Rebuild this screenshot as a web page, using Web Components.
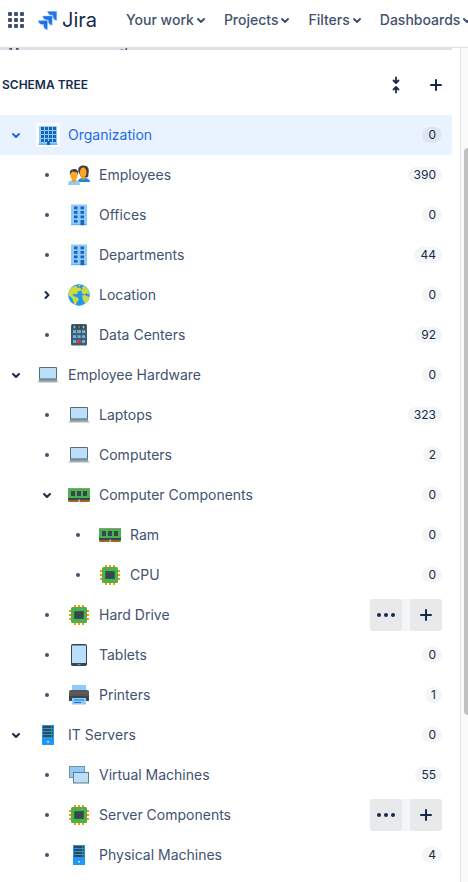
<!DOCTYPE html>
<html lang="en">
<head>
<meta charset="utf-8">
<meta name="viewport" content="width=device-width, initial-scale=1">
<title>Jira - Schema tree</title>
<style>
  html, body { height: 100%; }
  body { margin: 0; background: #fff; color: #42526e; font: 14px/20px Inter, "Liberation Sans", sans-serif; }
</style>
</head>
<body>
<app-shell>
  <jira-header slot="header">
    <nav-item>Your work</nav-item>
    <nav-item>Projects</nav-item>
    <nav-item>Filters</nav-item>
    <nav-item>Dashboards</nav-item>
  </jira-header>
  <schema-link>Asset management</schema-link>
  <tree-toolbar>Schema tree</tree-toolbar>
  <schema-tree>
    <tree-row icon="campus" state="open" count="0" selected>Organization</tree-row>
    <tree-row level="1" icon="people" count="390">Employees</tree-row>
    <tree-row level="1" icon="office" count="0">Offices</tree-row>
    <tree-row level="1" icon="office" count="44">Departments</tree-row>
    <tree-row level="1" icon="globe" state="closed" count="0">Location</tree-row>
    <tree-row level="1" icon="datacenter" count="92">Data Centers</tree-row>
    <tree-row icon="laptop" state="open" count="0">Employee Hardware</tree-row>
    <tree-row level="1" icon="laptop" count="323">Laptops</tree-row>
    <tree-row level="1" icon="laptop" count="2">Computers</tree-row>
    <tree-row level="1" icon="ram" state="open" count="0">Computer Components</tree-row>
    <tree-row level="2" icon="ram" count="0">Ram</tree-row>
    <tree-row level="2" icon="cpu" count="0">CPU</tree-row>
    <tree-row level="1" icon="cpu" actions>Hard Drive</tree-row>
    <tree-row level="1" icon="tablet" count="0">Tablets</tree-row>
    <tree-row level="1" icon="printer" count="1">Printers</tree-row>
    <tree-row icon="server" state="open" count="0">IT Servers</tree-row>
    <tree-row level="1" icon="windows" count="55">Virtual Machines</tree-row>
    <tree-row level="1" icon="cpu" actions>Server Components</tree-row>
    <tree-row level="1" icon="server" count="4">Physical Machines</tree-row>
  </schema-tree>
</app-shell>

<script>
const rect = (x, y, w, h, fill, extra = '') => `<rect x="${x}" y="${y}" width="${w}" height="${h}" fill="${fill}" ${extra}/>`;
const grid = (xs, ys, w, h, fill) => ys.map(y => xs.map(x => rect(x, y, w, h, fill)).join('')).join('');

/* Object type icons, all on a 24 x 24 grid. */
const ICONS = {
  campus: rect(3, 3, 18, 18, '#90caf9') + rect(2.5, 20.5, 19, 1.5, '#64b5f6')
    + grid([5, 9, 13, 17], [4, 8, 12, 16], 3, 3, '#1565c0') + rect(11, 18, 3, 4, '#1565c0'),
  office: rect(4, 1.5, 16, 20, '#90caf9') + rect(4, 21, 16, 1.2, '#64b5f6')
    + grid([7, 13.5], [3.5, 8, 12.5], 3.5, 2.8, '#1565c0') + rect(7, 17, 3.5, 2.6, '#1565c0') + rect(13.5, 17, 3.6, 5.2, '#1565c0'),
  people: `<path d="M11 19c0-3 2-4 5.500-4s6.500 1 6.500 4z" fill="#1e88e5"/><path d="M11.500 9c-1.200-5 1.800-6.500 5-6.500 4.500 0 6.200 3.500 5 8-.5 2.500 .8 3-2 4h-5z" fill="#424242"/><ellipse cx="16.200" cy="9.500" rx="3.300" ry="5" fill="#ffa726"/><path d="M14.500 13h3.500v2.500l-2 1.500-1.500-1.500z" fill="#ff9800"/><path d="M1 22c0-4 2.500-5 6-5s6 1 6 5z" fill="#90caf9"/><path d="M5 16h4v2l-2 1.500L5 18z" fill="#ff9800"/><ellipse cx="7" cy="12.500" rx="3.700" ry="4.700" fill="#ffa726"/><path d="M3 12c-.8-4 1-6 4.200-6 3.500 0 4.500 2.500 3.800 6l-1-2.500-4.500-1L4 10z" fill="#424242"/>`,
  globe: `<circle cx="12" cy="12" r="10.700" fill="#2196f3"/><path d="M3 6.500 6 3.500l4-.8.500 2.300 2-.5 2.500 2-2 1.500-2 .5-.5 2-2.500 1-1-1-1.500 1.500 2 1.500 3 1 1.500 2-2.500 3-.5 2.800L7 21l-1-4-2-3-2.300-1.500L2 8z" fill="#cddc39"/><path d="M15 4.500l1.500-2 4 3.500 1.700 4-1 1.500-1.500-1.500-2 1.500-2.500-1-1-2.500 1.500-2zM15 12.500l3-.5 3 1.500 1.500.5-2 4.500-2.500 2-2-3.500z" fill="#cddc39"/><path d="M11 2l3 .2-1.500 1.600z" fill="#cddc39"/>`,
  datacenter: rect(4, 1, 16, 21.500, '#455a64', 'rx="1.500"') + rect(5, 2, 14, 3.500, '#37474f')
    + `<path d="M7.500 2.500v3M6 4h3M12 3v2M15 4h3M16.500 2.500v3" stroke="#90caf9" stroke-width=".8"/>`
    + grid([6, 10.500, 15], [7.300, 12.200, 17.100], 3.200, 2.800, '#64b5f6') + rect(10.500, 7.300, 3.200, 2.800, '#90a4ae') + rect(10.500, 17.100, 3.200, 2.800, '#f32929'),
  laptop: rect(3, 4, 18, 13, '#546e7a', 'rx="1"') + rect(4, 5, 16, 10.500, '#bbdefb')
    + `<path d="M1 18.500h22l-1 1.500H2z" fill="#cfd8dc"/><path d="M3.500 15.500h17l1 3h-19z" fill="#78909c"/><path d="M3 17.500h18v1H3z" fill="#90a4ae"/>`,
  ram: rect(1, 5, 22, 14, '#4caf50', 'rx="1"') + rect(1, 5, 22, 1, '#81a56d', 'rx=".5"')
    + grid([4, 10, 16], [8], 4, 5, '#37474f') + rect(1, 15, 22, 2, '#37474f') + rect(2, 17, 9.500, 2, '#a1651f') + rect(13, 17, 9, 2, '#a1651f') + rect(11.500, 16.500, 1.500, 2.500, '#b0bec5'),
  cpu: grid([7, 11, 15], [2, 20], 2, 2, '#ff9800') + grid([2, 20], [7, 11, 15], 2, 2, '#ff9800')
    + rect(4, 4, 16, 16, '#4caf50', 'rx="1.500"') + rect(7, 8, 10, 8, '#33703a', 'rx=".5"') + rect(8, 8.500, 8, 7, '#37474f'),
  tablet: rect(4, 1, 16, 22, '#37474f', 'rx="1.800"') + rect(5, 2.500, 14, 17.500, '#bbdefb') + rect(10.500, 21, 3, 1, '#78909c'),
  printer: rect(5, 2, 14, 8, '#90caf9') + `<path d="M2 9q0-2 2-2h16q2 0 2 2v8q0 1-1 1H3q-1 0-1-1z" fill="#555"/><path d="M2 13h20v4q0 1-1 1H3q-1 0-1-1z" fill="#37474f"/>`
    + rect(5, 2, 14, 5, '#90caf9') + rect(2.500, 9.500, 19, 1, '#696969') + rect(5, 15, 14, 6.500, '#90caf9') + rect(7, 16.500, 10, 1, '#1976d2') + rect(7, 19, 7, 1, '#1976d2'),
  server: rect(6, 2, 12, 20, '#2196f3') + grid([7], [3, 6, 9, 12], 10, 2, '#37474f') + grid([15], [3, 6, 9, 12], 1, 2, '#388e3c') + rect(11, 18, 2, 1.500, '#bbdefb'),
  windows: rect(2.500, 3.500, 15, 11, '#90caf9', 'stroke="#78909c"') + rect(6.500, 9.500, 15, 10.500, '#bbdefb', 'stroke="#607d8b"')
};

/* Interface glyphs, drawn in the current text colour. */
const stroke = (d, w = 2) => `<path d="${d}" fill="none" stroke="currentColor" stroke-width="${w}" stroke-linecap="round" stroke-linejoin="round"/>`;
const GLYPHS = {
  down: stroke('M9 11l3 3 3-3'),
  right: stroke('M10.500 9l3 3-3 3'),
  dot: '<circle cx="12" cy="12" r="2" fill="currentColor"/>',
  plus: stroke('M12 7v10M7 12h10'),
  more: '<circle cx="5" cy="12" r="2" fill="currentColor"/><circle cx="12" cy="12" r="2" fill="currentColor"/><circle cx="19" cy="12" r="2" fill="currentColor"/>',
  collapse: stroke('M12 4.500v5M9.500 7.500l2.500 2.500 2.500-2.500M12 19.500v-5M9.500 16.500l2.500-2.500 2.500 2.500', 1.8),
  apps: [4, 10, 16].map(y => [4, 10, 16].map(x => rect(x, y, 4, 4, 'currentColor', 'rx="1"')).join('')).join(''),
  book: '<path d="M5 3h14v19h-4v-3H9v3H5z" fill="currentColor"/>'
};

function define(name, markup, setup) {
  const template = document.createElement('template');
  template.innerHTML = markup;
  customElements.define(name, class extends HTMLElement {
    connectedCallback() {
      if (this.shadowRoot) return;
      this.attachShadow({ mode: 'open' }).append(template.content.cloneNode(true));
      if (setup) setup(this, this.shadowRoot);
    }
  });
}

const BUTTON = `button { display: flex; align-items: center; justify-content: center; flex: none; margin: 0; padding: 0; border: 0; background: none; color: inherit; font: inherit; cursor: pointer; }`;

define('ui-glyph', `<style>:host { display: block; flex: none; width: 24px; height: 24px; } svg { display: block; width: 100%; height: 100%; }</style><svg viewBox="0 0 24 24" aria-hidden="true"></svg>`,
  (el, root) => { root.querySelector('svg').innerHTML = GLYPHS[el.getAttribute('name')] || ICONS[el.getAttribute('name')]; });

define('app-shell', `<style>
  :host { display: flex; flex-direction: column; height: 100vh; overflow: hidden; }
  .body { display: flex; flex: 1; min-height: 0; }
  main { flex: 1; min-width: 0; overflow: hidden; padding-right: 8px; border-right: 1px solid #e3e4e6; }
  aside { position: relative; flex: none; width: 7px; background: #fafafa; overflow: hidden; }
  .thumb { position: absolute; top: 12%; left: 3px; width: 8px; height: 68%; border-radius: 4px; background: #c1c1c1; }
</style><slot name="header"></slot><div class="body"><main><slot></slot></main><aside><div class="thumb"></div></aside></div>`);

define('jira-header', `<style>
  ${BUTTON}
  :host { display: block; flex: none; overflow: hidden; border-bottom: 1px solid #dfe1e6; }
  header { display: flex; align-items: center; height: 40px; padding: 0 0 7px 4px; }
  a { display: flex; align-items: center; gap: 5px; margin: 0 29px 0 10px; color: #172b4d; font-size: 20px; line-height: 24px; text-decoration: none; }
  svg { display: block; width: 19px; height: 19px; }
  nav { display: flex; gap: 18px; }
</style><header>
  <button aria-label="Switch to"><ui-glyph name="apps"></ui-glyph></button>
  <a href="#"><svg viewBox="0 0 19 19" aria-hidden="true">
    <defs><linearGradient id="g" x1="1" y1="0" x2="0" y2="1"><stop offset="0" stop-color="#1868db"/><stop offset="1" stop-color="#2684ff"/></linearGradient></defs>
    <g stroke="#a9cfff" stroke-width=".5">
    <path d="M9.500 .2H18.800v9.300c-2.200 0-4-1.800-4-4V4.200h-1.300c-2.200 0-4-1.800-4-4z" fill="#2477ee"/>
    <path d="M4.700 4.900h9.500v9.300c-2.200 0-4-1.800-4-4V8.900H8.700c-2.200 0-4-1.800-4-4z" fill="url(#g)"/>
    <path d="M.2 9.600h9.300v9.200c-2.200 0-4-1.800-4-4v-1.200H4.200c-2.200 0-4-1.800-4-4z" fill="url(#g)"/>
    </g>
  </svg><span>Jira</span></a>
  <nav><slot></slot></nav>
</header>`);

define('nav-item', `<style>
  ${BUTTON}
  :host { display: block; flex: none; }
  button { font-weight: 500; white-space: nowrap; }
  ui-glyph { width: 24px; height: 24px; margin: 0 -7px 0 -5px; }
</style><button><slot></slot><ui-glyph name="down"></ui-glyph></button>`);

define('schema-link', `<style>
  :host { display: flex; flex-direction: column; justify-content: flex-end; height: 2px; overflow: hidden; background: #dfe1e6; }
  a { display: flex; flex: none; align-items: center; gap: 20px; padding-left: 6px; margin-bottom: -3px; color: inherit; text-decoration: none; }
  ui-glyph { width: 16px; height: 16px; }
</style><a href="#"><ui-glyph name="book"></ui-glyph><slot></slot></a>`);

define('tree-toolbar', `<style>
  ${BUTTON}
  :host { display: flex; align-items: center; padding: 19px 0 14px; color: #172b4d; }
  h2 { flex: 1; margin: 0 0 0 2px; font-size: 12px; line-height: 16px; font-weight: 600; text-transform: uppercase; }
  button { width: 32px; height: 32px; }
  button + button { margin-left: 8px; }
</style><h2><slot></slot></h2>
<button aria-label="Collapse all"><ui-glyph name="collapse"></ui-glyph></button>
<button aria-label="Create object type"><ui-glyph name="plus"></ui-glyph></button>`);

define('schema-tree', `<style>:host { display: block; }</style><div role="tree"><slot></slot></div>`);

define('tree-row', `<style>
  ${BUTTON}
  :host { display: flex; align-items: center; height: 40px; padding-right: 10px; border-radius: 0 3px 3px 0; }
  :host([level="1"]) { padding-left: 31px; }
  :host([level="2"]) { padding-left: 62px; }
  :host([selected]) { background: #e9f2ff; color: #1d6ce0; }
  .lead { display: flex; justify-content: center; flex: none; width: 32px; margin-right: 4px; color: #42526e; }
  button.lead { color: #172b4d; }
  :host([selected]) .lead { color: inherit; }
  :host([selected]) .icon { background: #fff; border-radius: 2px; }
  a { flex: 1; min-width: 0; margin-left: 8px; color: inherit; text-decoration: none; white-space: nowrap; overflow: hidden; text-overflow: ellipsis; }
  .badge { flex: none; padding: 0 6px; border-radius: 8px; background: #f4f5f7; color: #172b4d; font-size: 12px; line-height: 16px; }
  :host([selected]) .badge { background: #dfe5ef; }
  .actions { display: flex; gap: 8px; background: #f4f5f7; border-radius: 3px; color: #172b4d; }
  .actions button { width: 32px; height: 32px; border-radius: 3px; background: #e8e9eb; }
</style><a href="#"><slot></slot></a>`,
  (el, root) => {
    const state = el.getAttribute('state');
    const name = el.textContent;
    el.setAttribute('role', 'treeitem');
    const lead = state
      ? `<button class="lead" aria-label="Toggle ${name}"><ui-glyph name="${state === 'open' ? 'down' : 'right'}"></ui-glyph></button>`
      : `<span class="lead"><ui-glyph name="dot"></ui-glyph></span>`;
    const link = root.querySelector('a');
    link.insertAdjacentHTML('beforebegin', `${lead}<ui-glyph class="icon" name="${el.getAttribute('icon')}"></ui-glyph>`);
    link.insertAdjacentHTML('afterend', el.hasAttribute('actions')
      ? `<div class="actions"><button aria-label="More actions for ${name}"><ui-glyph name="more"></ui-glyph></button><button aria-label="Add to ${name}"><ui-glyph name="plus"></ui-glyph></button></div>`
      : `<span class="badge">${el.getAttribute('count')}</span>`);
  });
</script>
</body>
</html>
